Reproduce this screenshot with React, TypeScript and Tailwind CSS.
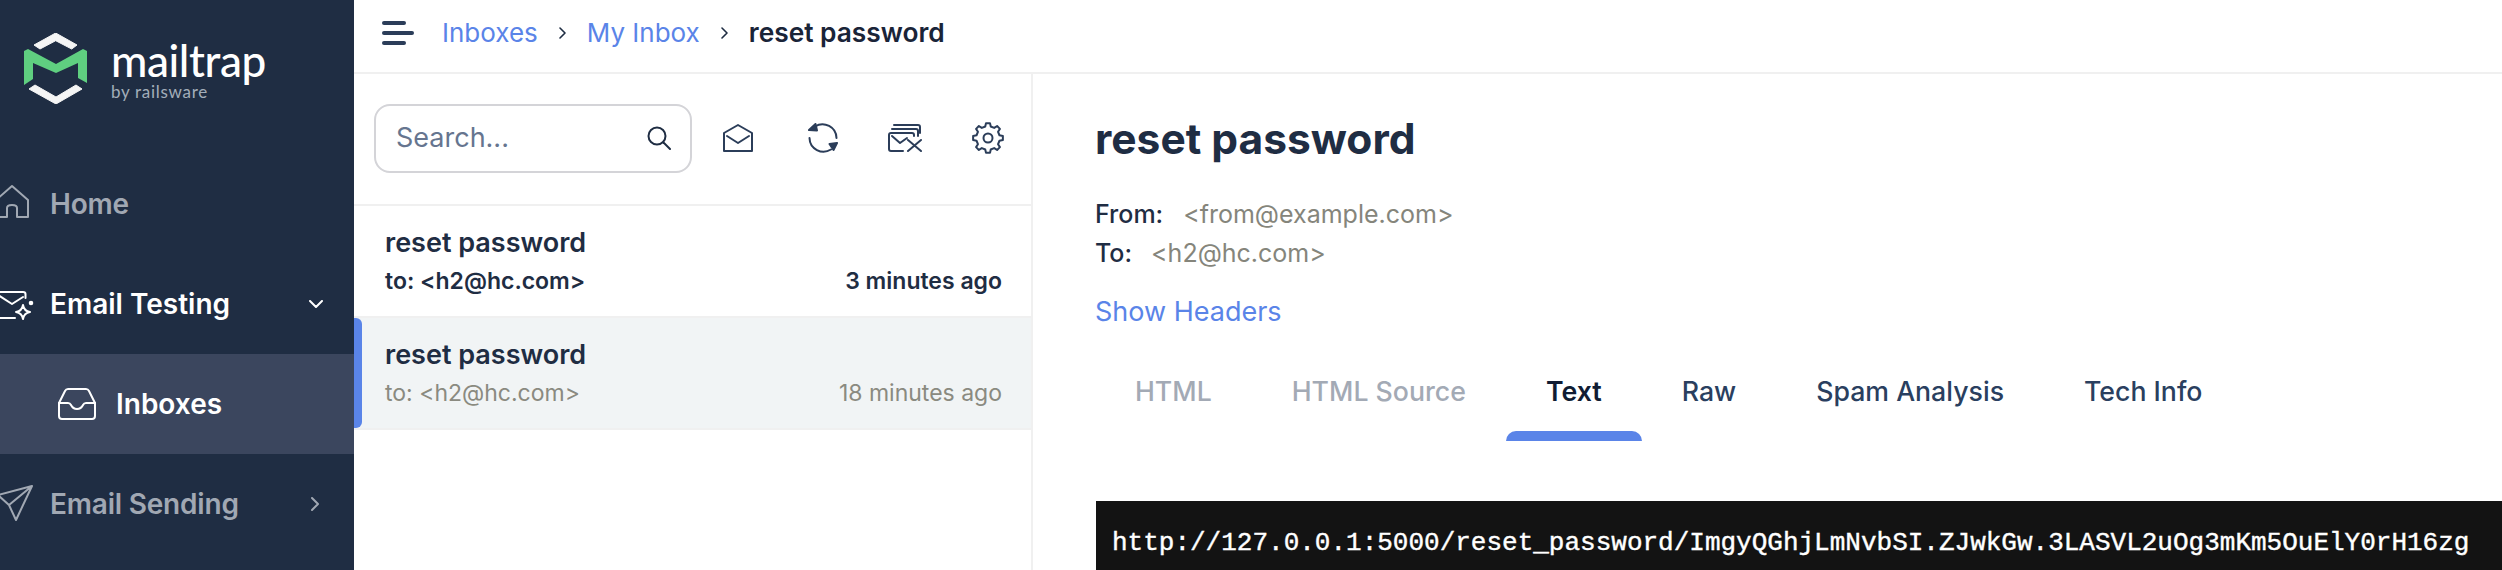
import React from "react";

const font = { fontFamily: "Inter, 'Liberation Sans', sans-serif" };

function Logo() {
  return (
    <div className="h-[154px] shrink-0 flex items-start pt-[33px] pl-[24px]">
      <svg viewBox="24 33 63 71" className="w-[63px] h-[71px] shrink-0">
        <path d="M55.7 33 L77 45 L71.7 49 L55.7 40.7 L40 49 L34 45 Z" fill="#f5f5f5" strokeLinejoin="round" stroke="#f5f5f5" strokeWidth="1" />
        <path d="M24 51 L28 49 L56 64 L83 49 L87 51 V83 L78 78 V63 L56 73 L33 63 V79 L24 85 Z" fill="#5fcf80" />
        <path d="M29 89 L35 85 L56 97 L76 85 L82 89 L56 104 Z" fill="#f5f5f5" strokeLinejoin="round" stroke="#f5f5f5" strokeWidth="1" />
      </svg>
      <div className="ml-[24px] mt-[9px] flex flex-col">
        <span className="text-white text-[44px] leading-[36px] font-medium tracking-[-0.4px]" style={{ fontFamily: "Lato, sans-serif" }}>mailtrap</span>
        <span className="text-[#a3adb9] text-[17px] leading-[16px] mt-[6px] tracking-[0.7px]" style={{ fontFamily: "Lato, sans-serif" }}>by railsware</span>
      </div>
    </div>
  );
}

function NavRow({ icon, label, active, chevron, h = "h-[100px]" }: { icon: React.ReactNode; label: string; active?: boolean; chevron?: "down" | "right"; h?: string }) {
  const c = active ? "#ffffff" : "#a1a8b3";
  return (
    <div className={`${h} flex items-center pr-[31px]`}>
      {icon}
      <span className={`text-[28px] font-semibold ${active ? "text-white" : "text-[#a1a8b3] tracking-[-0.2px]"}`}>{label}</span>
      {chevron === "down" && (
        <svg viewBox="0 0 14 8" className="ml-auto w-[14px] h-[8px]" fill="none" stroke={c} strokeWidth="2" strokeLinecap="round" strokeLinejoin="round"><path d="M1 1l6 6 6-6" /></svg>
      )}
      {chevron === "right" && (
        <svg viewBox="0 0 8 14" className="ml-auto mr-[4px] w-[8px] h-[14px]" fill="none" stroke={c} strokeWidth="2" strokeLinecap="round" strokeLinejoin="round"><path d="M1 1l6 6-6 6" /></svg>
      )}
    </div>
  );
}

const Slot = ({ children, stroke }: { children: React.ReactNode; stroke: string }) => (
  <svg viewBox="0 0 50 40" className="w-[50px] h-[40px] shrink-0 overflow-visible" fill="none" stroke={stroke} strokeWidth="2" strokeLinejoin="round" strokeLinecap="round">{children}</svg>
);

function Sidebar() {
  return (
    <aside className="w-[354px] shrink-0 h-full bg-[#1f2d43] flex flex-col overflow-hidden">
      <Logo />
      <NavRow label="Home" h="h-[99px]" icon={
        <Slot stroke="#a1a8b3"><path d="M-4 16 L12 2 L28 16 V33 H17 V24 Q17 21 12 21 Q7 21 7 24 V33 H-4" /></Slot>
      } />
      <NavRow label="Email Testing" active chevron="down" h="h-[101px]" icon={
        <Slot stroke="#ffffff">
          <path d="M-2 8 H23 Q25.5 8 25.5 10 V14" />
          <path d="M-2 11 L12 20 L23 13" />
          <path d="M-2 34 H15" />
          <path d="M23 21 Q24 27 30 28 Q24 29 23 35 Q22 29 16 28 Q22 27 23 21 Z" />
          <circle cx="31" cy="19" r="1.3" fill="#ffffff" />
        </Slot>
      } />
      <div className="h-[100px] bg-[#3b465e] flex items-center pl-[58px]">
        <svg viewBox="0 0 38 32" className="w-[38px] h-[32px] shrink-0 mr-[20px]" fill="none" stroke="#fff" strokeWidth="2" strokeLinejoin="round" strokeLinecap="round">
          <path d="M1 15 L7 3 Q8 1 10 1 H28 Q30 1 31 3 L37 15 V28 Q37 31 34 31 H4 Q1 31 1 28 Z" />
          <path d="M1 15 H10 Q12 15 13 17 Q15 21 19 21 Q23 21 25 17 Q26 15 28 15 H37" />
        </svg>
        <span className="text-[28px] font-semibold text-white">Inboxes</span>
      </div>
      <NavRow label="Email Sending" chevron="right" icon={
        <Slot stroke="#a1a8b3"><path d="M-2 11 L32 2 L16 36 L9 21 Z M9 21 L32 2" /></Slot>
      } />
    </aside>
  );
}

const Chevron = ({ className }: { className: string }) => (
  <svg viewBox="0 0 7 12" className={`w-[7px] h-[12px] ${className}`} fill="none" stroke="#1f2d43" strokeWidth="1.6" strokeLinecap="round" strokeLinejoin="round"><path d="M1 1l5 5-5 5" /></svg>
);

function TopBar() {
  return (
    <header className="h-[74px] shrink-0 border-b-2 border-[#f0f0f0] flex items-center pl-[28px] pb-[7px]">
      <div className="flex flex-col gap-[6px] w-[32px] shrink-0 mr-[28px]">
        <div className="h-[4px] w-[24px] rounded-full bg-[#2b3d59]" />
        <div className="h-[4px] w-[32px] rounded-full bg-[#2b3d59]" />
        <div className="h-[4px] w-[24px] rounded-full bg-[#2b3d59]" />
      </div>
      <span className="text-[26px] text-[#5a84e8]">Inboxes</span>
      <Chevron className="mx-[21px]" />
      <span className="text-[26px] text-[#5a84e8]">My Inbox</span>
      <Chevron className="mx-[21px]" />
      <span className="text-[26.3px] font-semibold text-[#1a2438]">reset password</span>
    </header>
  );
}

const ti = { fill: "none", stroke: "#2b3d59", strokeWidth: 2, strokeLinecap: "round", strokeLinejoin: "round" } as const;

const cogPath = (() => {
  const teeth = 8;
  const pts: string[] = [];
  for (let i = 0; i < teeth; i++) {
    const a = (i / teeth) * Math.PI * 2 - Math.PI / 2;
    const step = (Math.PI * 2) / teeth;
    const seq: [number, number][] = [
      [a - step * 0.3, 11.8],
      [a - step * 0.17, 15],
      [a + step * 0.17, 15],
      [a + step * 0.3, 11.8],
    ];
    for (const [t, r] of seq) pts.push(`${(16 + Math.cos(t) * r).toFixed(2)} ${(16 + Math.sin(t) * r).toFixed(2)}`);
  }
  return "M" + pts.join(" L") + " Z";
})();

function Toolbar() {
  return (
    <div className="h-[132px] shrink-0 border-b-2 border-[#f0f0f0] flex items-center pl-[20px] pb-[2px]">
      <div className="w-[318px] h-[69px] rounded-[16px] border-2 border-[#d4d4d8] flex items-center pl-[20px] pr-[19px] shrink-0">
        <span className="text-[27px] text-[#66758f]">Search...</span>
        <svg viewBox="0 0 24 24" className="ml-auto w-[24px] h-[24px]" fill="none" stroke="#1f2d43" strokeWidth="2" strokeLinecap="round"><circle cx="10" cy="10" r="8.5" /><path d="M16.5 16.5 L23 23" /></svg>
      </div>
      <svg viewBox="0 0 30 28" className="w-[30px] h-[28px] ml-[31px] shrink-0" {...ti}>
        <path d="M1 9 L15 1 L29 9 V27 H1 Z" /><path d="M4 12 L15 19 L26 12" />
      </svg>
      <svg viewBox="0 0 30 30" className="w-[30px] h-[30px] ml-[55px] shrink-0" {...ti}>
        <path d="M7 3.5 A14 14 0 0 1 28.5 15" />
        <path d="M23 26.5 A14 14 0 0 1 1.5 15" />
        <path d="M1 7 L7.5 1 L9 7.5 Z" fill="#2b3d59" />
        <path d="M29 20 L21.5 21 L25.5 27 Z" fill="#2b3d59" />
      </svg>
      <svg viewBox="0 0 34 28" className="w-[34px] h-[28px] ml-[50px] shrink-0" {...ti}>
        <path d="M1 14 V25 Q1 27 3 27 H15" />
        <path d="M1 14 V11 Q1 9 3 9 H24 Q26 9 26 11 V12" />
        <path d="M4 12 L12 19 L19 14" />
        <path d="M4 5 H28 Q30 5 30 7 V12" />
        <path d="M6 1 H30 Q32 1 32 3 V9" />
        <path d="M20 16 L33 27 M33 16 L20 27" />
      </svg>
      <svg viewBox="0 0 32 32" className="w-[32px] h-[32px] ml-[50px] shrink-0" {...ti}>
        <path d={cogPath} />
        <circle cx="16" cy="16" r="4.5" />
      </svg>
    </div>
  );
}

function MailRow({ time, unread, active }: { time: string; unread?: boolean; active?: boolean }) {
  return (
    <div className={`relative h-[112px] shrink-0 border-b-2 border-[#f0f0f0] pl-[31px] pr-[29px] pt-[2px] flex flex-col justify-center gap-[8px] ${active ? "bg-[#f1f4f5]" : ""}`}>
      {active && <div className="absolute left-0 top-0 bottom-0 w-[8px] rounded-r-[6px] bg-[#5a84e8]" />}
      <div className="text-[27px] leading-[30px] font-semibold text-[#1f2d43]">reset password</div>
      <div className={`flex justify-between text-[23px] leading-[30px] ${unread ? "font-semibold text-[#1f2d43]" : "text-[#8a8a80]"}`}>
        <span>to: &lt;h2@hc.com&gt;</span>
        <span>{time}</span>
      </div>
    </div>
  );
}

function List() {
  return (
    <section className="w-[679px] shrink-0 h-full border-r-2 border-[#f0f0f0] flex flex-col">
      <Toolbar />
      <MailRow time="3 minutes ago" unread />
      <MailRow time="18 minutes ago" active />
    </section>
  );
}

function Tab({ label, kind }: { label: string; kind: "off" | "on" | "norm" }) {
  return (
    <div className="relative h-[98px] px-[40px] pb-[2px] flex items-center">
      <span className={`text-[26.7px] ${kind === "off" ? "text-[#a3aab5] font-medium" : kind === "on" ? "text-[#101c33] font-semibold" : "text-[#2a3f5f] font-medium"}`}>{label}</span>
      {kind === "on" && <div className="absolute left-0 right-0 bottom-0 h-[10px] rounded-t-[10px] bg-[#5a84e8]" />}
    </div>
  );
}

function Detail() {
  return (
    <section className="flex-1 min-w-0 h-full overflow-hidden flex flex-col pl-[62px]">
      <h1 className="mt-[39px] text-[42.5px] leading-[52px] font-bold text-[#1f2d43]">reset password</h1>
      <div className="mt-[30px] text-[25px] leading-[39px]">
        <div className="flex"><span className="font-medium text-[#1f2d43] mr-[20px]">From:</span><span className="text-[#85857b]">&lt;from@example.com&gt;</span></div>
        <div className="flex"><span className="font-medium text-[#1f2d43] mr-[19px]">To:</span><span className="text-[#85857b]">&lt;h2@hc.com&gt;</span></div>
      </div>
      <div className="mt-[20px] text-[27px] leading-[38px] text-[#5a84e8]">Show Headers</div>
      <div className="mt-[12px] flex h-[98px] shrink-0">
        <Tab label="HTML" kind="off" />
        <Tab label="HTML Source" kind="off" />
        <Tab label="Text" kind="on" />
        <Tab label="Raw" kind="norm" />
        <Tab label="Spam Analysis" kind="norm" />
        <Tab label="Tech Info" kind="norm" />
      </div>
      <pre className="mt-[60px] ml-[1px] bg-[#131313] text-white pt-[26px] pl-[16px] h-[100px] shrink-0 text-[26px] leading-[32px] [-webkit-text-stroke:0.4px_white]" style={{ fontFamily: "'Liberation Mono', monospace" }}>http://127.0.0.1:5000/reset_password/ImgyQGhjLmNvbSI.ZJwkGw.3LASVL2uOg3mKm5OuElY0rH16zg</pre>
    </section>
  );
}

export default function App() {
  return (
    <div className="w-[2502px] h-[570px] overflow-hidden bg-white flex" style={font}>
      <Sidebar />
      <main className="flex-1 min-w-0 flex flex-col h-full">
        <TopBar />
        <div className="flex flex-1 min-h-0">
          <List />
          <Detail />
        </div>
      </main>
    </div>
  );
}
